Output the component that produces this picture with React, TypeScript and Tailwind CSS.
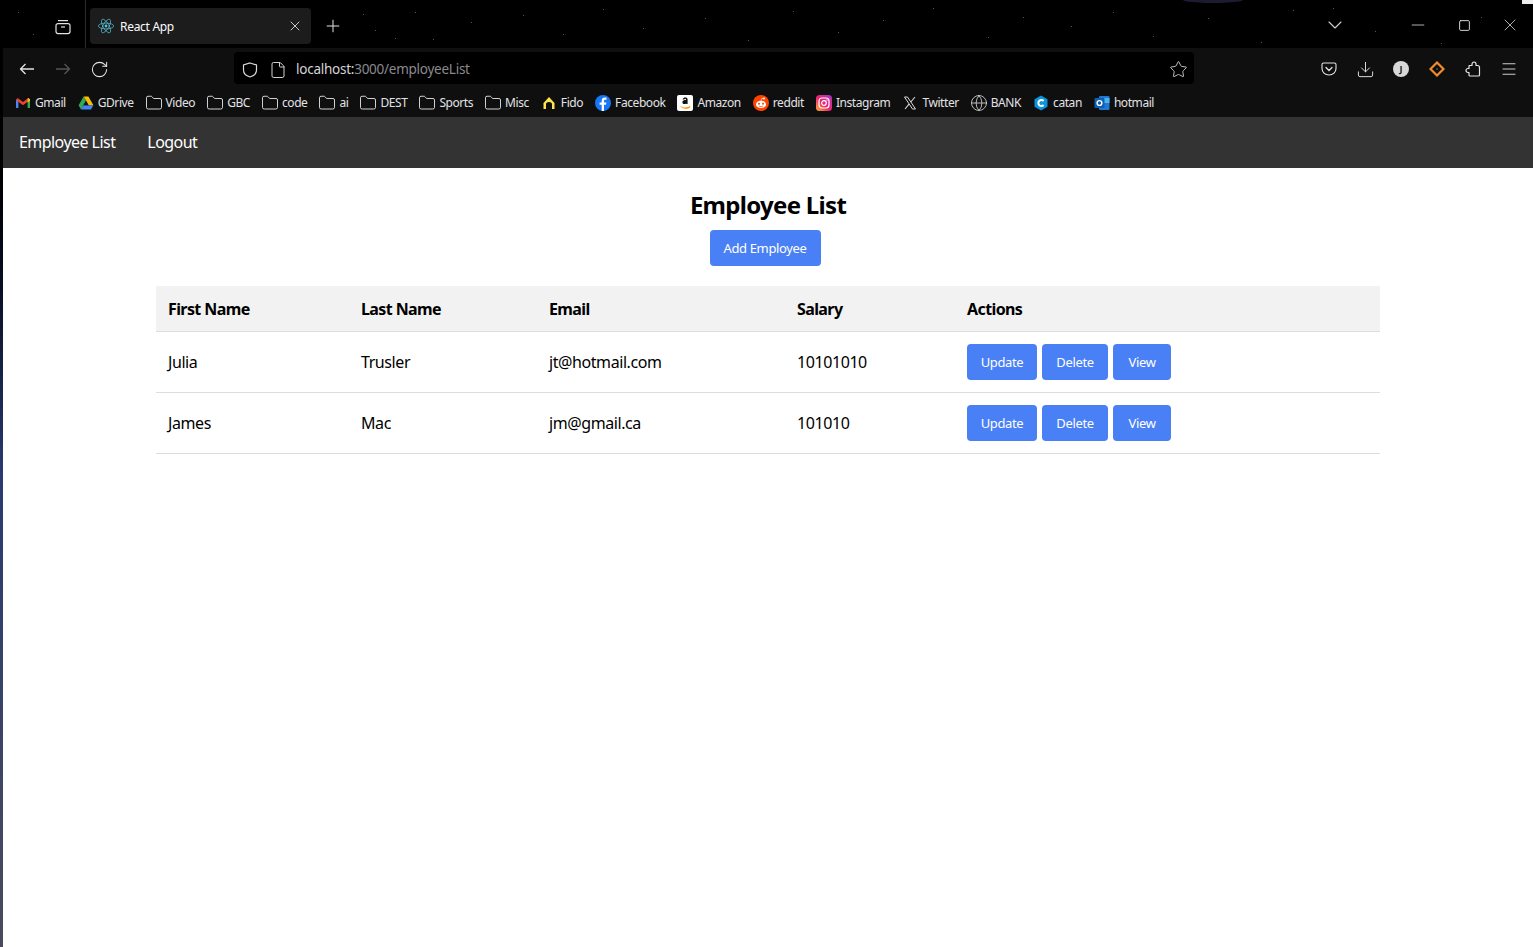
import { ChevronDown, Download, File, Folder, Globe, Menu, Minus, Plus, RotateCw, Square, Star, X } from 'lucide-react';
import type { ReactNode } from 'react';

const font = 'font-["Noto_Sans","Open_Sans",sans-serif]';

const stars = [
  [130, 9], [152, 17], [360, 14], [372, 30], [392, 38], [412, 12], [430, 39], [468, 22], [520, 15], [560, 34], [600, 9],
  [640, 28], [702, 18], [745, 40], [790, 11], [835, 32], [880, 20], [930, 8], [985, 37], [1020, 17], [1068, 26], [1110, 12],
  [1150, 36], [1205, 18], [1258, 42], [1290, 10], [1330, 8], [1372, 31], [1438, 43], [1478, 17], [30, 34], [15, 12],
];

function Bookmark({ icon, label }: { icon: ReactNode; label: string }) {
  return (
    <div className="flex h-4 items-center gap-[4px] text-[12px] leading-4 tracking-[-0.43px] text-[#e2e2e6]">
      <span className="flex h-4 w-4 shrink-0 items-center justify-center">{icon}</span>
      <span>{label}</span>
    </div>
  );
}

const folder = <Folder size={18} strokeWidth={1.2} className="shrink-0 text-[#e8e8ea]" />;

const Gmail = (
  <svg viewBox="0 0 16 16" className="h-4 w-4">
    <path d="M1 13V4.5L3.4 5.2V13H1Z" fill="#4a87f0" />
    <path d="M15 13V4.5L12.6 5.2V13H15Z" fill="#36a853" />
    <path d="M1 5L2.6 3L8 7L13.4 3L15 5L8 10.2L1 5Z" fill="#ea4335" />
    <path d="M13.4 3L15 4.2V6L12.6 7.6V3.6Z" fill="#fbbc04" />
  </svg>
);

const Drive = (
  <svg viewBox="0 0 16 16" className="h-4 w-4">
    <path d="M5.6 1.5H10.4L15.4 10.2H10.6Z" fill="#fbbc04" />
    <path d="M5.6 1.5L8 5.7L3 14.4L.6 10.2Z" fill="#34a853" />
    <path d="M3 14.4L5.4 10.2H15.4L13 14.4Z" fill="#4285f4" />
    <path d="M8 5.7L10.6 10.2H5.4Z" fill="#1a1a1a" />
  </svg>
);

const Fido = (
  <svg viewBox="0 0 16 16" className="h-4 w-4">
    <path d="M8 2L13.5 8V14H11V9.2C11 7.8 9.6 7 8 7S5 7.8 5 9.2V14H2.5V8Z" fill="#ffe44d" />
  </svg>
);

const Facebook = (
  <svg viewBox="0 0 16 16" className="h-4 w-4">
    <circle cx="8" cy="8" r="8" fill="#1877f2" />
    <path d="M9 16V9.8H11L11.4 7.4H9V6C9 5.2 9.3 4.7 10.4 4.7H11.5V2.6C11.2 2.5 10.5 2.5 9.9 2.5C8 2.5 6.7 3.6 6.7 5.7V7.4H4.6V9.8H6.7V16Z" fill="#fff" />
  </svg>
);

const Amazon = (
  <svg viewBox="0 0 16 16" className="h-4 w-4">
    <rect width="16" height="16" rx="2" fill="#fff" />
    <path d="M5.6 4.6C5.8 3 7 2.4 8.2 2.4C9.6 2.4 10.6 3 10.6 4.4V9H9.2V8.4C8.2 9.4 5.4 9.5 5.4 7.2C5.4 5.5 7.3 5.1 9 5.1V4.5C9 3.6 7.6 3.5 7.3 4.6Z" fill="#111" />
    <path d="M2.5 10.6C5.4 13 10 13 13.4 10.8L13 12.8C10 14.6 5.6 14.4 2.5 10.6Z" fill="#f90" />
  </svg>
);

const Reddit = (
  <svg viewBox="0 0 16 16" className="h-4 w-4">
    <circle cx="8" cy="8" r="8" fill="#ff4500" />
    <ellipse cx="8" cy="9.4" rx="5" ry="3.6" fill="#fff" />
    <circle cx="6" cy="8.8" r="1" fill="#ff4500" />
    <circle cx="10" cy="8.8" r="1" fill="#ff4500" />
    <path d="M6 11C7 11.8 9 11.8 10 11" stroke="#ff4500" strokeWidth=".7" fill="none" />
    <circle cx="11" cy="3.6" r="1" fill="#fff" />
    <path d="M8 6L8.8 3.4L11 3.6" stroke="#fff" strokeWidth=".6" fill="none" />
  </svg>
);

const Instagram = (
  <svg viewBox="0 0 16 16" className="h-4 w-4">
    <defs>
      <linearGradient id="ig" x1="0" y1="1" x2="1" y2="0">
        <stop offset="0" stopColor="#fdb82f" />
        <stop offset=".45" stopColor="#f0246e" />
        <stop offset="1" stopColor="#a832c8" />
      </linearGradient>
    </defs>
    <rect width="16" height="16" rx="3.5" fill="url(#ig)" />
    <rect x="3" y="3" width="10" height="10" rx="3" fill="none" stroke="#fff" strokeWidth="1.2" />
    <circle cx="8" cy="8" r="2.3" fill="none" stroke="#fff" strokeWidth="1.2" />
    <circle cx="11" cy="5" r=".7" fill="#fff" />
  </svg>
);

const XLogo = (
  <svg viewBox="0 0 16 16" className="h-4 w-4">
    <path d="M2.5 2H5.5L13.5 14H10.5Z" fill="none" stroke="#d8d8d8" strokeWidth="1" />
    <path d="M13 2L8.8 7M7 9.2L3 14" stroke="#d8d8d8" strokeWidth="1.1" />
  </svg>
);

const Catan = (
  <svg viewBox="0 0 16 16" className="h-4 w-4">
    <path d="M8 .5L14.5 4.2V11.8L8 15.5L1.5 11.8V4.2Z" fill="#0a94dc" />
    <path d="M10.6 6A3 3 0 1 0 10.6 10" stroke="#fff" strokeWidth="2" fill="none" />
  </svg>
);

const Outlook = (
  <svg viewBox="0 0 16 16" className="h-4 w-4">
    <rect x="5" y="1" width="10.5" height="14" rx="1" fill="#1f78d1" />
    <rect x="10" y="3" width="5.5" height="5" fill="#50b0ee" />
    <rect x="0.5" y="3" width="10" height="10" rx="1" fill="#0d5fb0" />
    <circle cx="5.5" cy="8" r="2.4" fill="none" stroke="#fff" strokeWidth="1.4" />
  </svg>
);

const bookmarks: [ReactNode, string][] = [
  [Gmail, 'Gmail'], [Drive, 'GDrive'], [folder, 'Video'], [folder, 'GBC'], [folder, 'code'], [folder, 'ai'], [folder, 'DEST'],
  [folder, 'Sports'], [folder, 'Misc'], [Fido, 'Fido'], [Facebook, 'Facebook'], [Amazon, 'Amazon'], [Reddit, 'reddit'],
  [Instagram, 'Instagram'], [XLogo, 'Twitter'], [<Globe key="g" size={18} strokeWidth={1.1} className="shrink-0 text-[#d8d8d8]" />, 'BANK'],
  [Catan, 'catan'], [Outlook, 'hotmail'],
];

function ToolButton({ children }: { children: ReactNode }) {
  return <div className="flex h-8 w-9 items-center justify-center pt-[2px] text-[#e4e4e6]">{children}</div>;
}

function ActionButton({ label, className }: { label: string; className: string }) {
  return (
    <button className={`flex h-9 items-center justify-center rounded-[4px] bg-[#4a80f5] pt-[2px] text-[13px] tracking-[-0.35px] text-white ${className}`}>
      {label}
    </button>
  );
}

const rows = [
  ['Julia', 'Trusler', 'jt@hotmail.com', '10101010'],
  ['James', 'Mac', 'jm@gmail.ca', '101010'],
];

export default function App() {
  return (
    <div className={`flex min-h-[947px] w-full bg-white ${font}`}>
      <div className="w-[3px] shrink-0 bg-gradient-to-b from-black from-[12%] via-[#2a3a70] via-[50%] to-[#4a4a5c]" />
      <div className="flex min-w-0 flex-1 flex-col">
        <div className="relative flex h-12 items-center bg-black">
          <svg className="absolute inset-0 h-full w-full" aria-hidden="true">
            {stars.map(([x, y]) => (
              <rect key={`${x}-${y}`} x={x} y={y} width="1" height="1" fill="#555" />
            ))}
            <ellipse cx="1210" cy="0" rx="30" ry="3" fill="#1c1c30" />
            <rect x="1519" y="0" width="11" height="4" fill="#eee" />
          </svg>
          <div className="relative flex h-full w-[83px] items-center justify-end border-r border-[#2a2a2a] pr-[14px] pt-[6px]">
            <svg viewBox="0 0 16 16" className="h-4 w-4 shrink-0 text-[#e4e4e6]" fill="none" stroke="currentColor" strokeWidth="1.2">
              <rect x="1" y="4.6" width="14" height="10" rx="2" />
              <path d="M3 1.6H13" />
              <path d="M6 8H10" />
            </svg>
          </div>
          <div className="relative ml-[4px] mt-[4px] flex h-9 w-[221px] items-center rounded-[4px] bg-[#1c1c1c] pl-[8px] pr-[8px]">
            <svg viewBox="-11.5 -10.2 23 20.4" className="h-4 w-4 shrink-0" fill="none" stroke="#58c4dc" strokeWidth="1">
              <circle r="2" fill="#58c4dc" stroke="none" />
              <ellipse rx="11" ry="4.2" />
              <ellipse rx="11" ry="4.2" transform="rotate(60)" />
              <ellipse rx="11" ry="4.2" transform="rotate(120)" />
            </svg>
            <span className="ml-[6px] flex-1 pt-[1px] text-[12px] tracking-[-0.3px] text-[#fbfbfe]">React App</span>
            <X size={16} strokeWidth={1.3} className="text-[#e4e4e6]" />
          </div>
          <div className="relative ml-[4px] mt-[4px] flex h-9 w-9 items-center justify-center">
            <Plus size={20} strokeWidth={1.2} className="text-[#e4e4e6]" />
          </div>
          <div className="relative ml-auto flex h-full items-center text-[#d0d0d0]">
            <div className="flex w-9 justify-center pt-[2px]"><ChevronDown size={24} strokeWidth={1.1} /></div>
            <div className="ml-[42px] flex w-[46px] justify-center pt-[2px]"><Minus size={20} strokeWidth={1} /></div>
            <div className="flex w-[46px] justify-center pt-[2px]"><Square size={13} strokeWidth={1} absoluteStrokeWidth /></div>
            <div className="flex w-[46px] justify-center pt-[2px]"><X size={20} strokeWidth={1} /></div>
          </div>
        </div>

        <div className="flex h-10 items-center bg-[#0f0f0f] px-[6px]">
          <ToolButton>
            <svg viewBox="0 0 16 16" className="h-4 w-4" fill="none" stroke="currentColor" strokeWidth="1.3">
              <path d="M1.5 8H15M6.5 3L1.5 8L6.5 13" />
            </svg>
          </ToolButton>
          <ToolButton>
            <svg viewBox="0 0 16 16" className="h-4 w-4 text-[#555]" fill="none" stroke="currentColor" strokeWidth="1.3">
              <path d="M1 8H14.5M9.5 3L14.5 8L9.5 13" />
            </svg>
          </ToolButton>
          <ToolButton><RotateCw size={19} strokeWidth={1.3} /></ToolButton>
          <div className="ml-[117px] flex h-8 w-[960px] items-center rounded-[4px] bg-black pl-[8px] pr-[6px] pt-[3px]">
            <svg viewBox="0 0 16 16" className="h-4 w-4 shrink-0 text-[#d8d8da]" fill="none" stroke="currentColor" strokeWidth="1.2">
              <path d="M8 1L14.5 3V8C14.5 11.5 11.5 14 8 15C4.5 14 1.5 11.5 1.5 8V3Z" />
            </svg>
            <File size={18} strokeWidth={1.3} className="ml-[11px] shrink-0 text-[#d8d8da]" />
            <span className="ml-[9px] flex-1 text-[13.5px] tracking-[-0.25px] text-[#8a8a8e]">
              <span className="text-[#d4d4d8]">localhost:</span>3000/employeeList
            </span>
            <Star size={19} strokeWidth={1.1} className="shrink-0 text-[#d8d8da]" />
          </div>
          <div className="ml-auto flex">
            <ToolButton>
              <svg viewBox="0 0 16 16" className="h-4 w-4" fill="none" stroke="currentColor" strokeWidth="1.1">
                <path d="M2.5 2H13.5C14.3 2 15 2.7 15 3.5V7.5C15 11 12 14 8 14S1 11 1 7.5V3.5C1 2.7 1.7 2 2.5 2Z" />
                <path d="M5 6.5L8 9.5L11 6.5" strokeLinecap="round" strokeWidth="1.3" />
              </svg>
            </ToolButton>
            <ToolButton><Download size={19} strokeWidth={1.2} /></ToolButton>
            <ToolButton>
              <span className="flex h-4 w-4 items-center justify-center rounded-full bg-[#d8d8d8] text-[9px] font-bold text-[#222]">J</span>
            </ToolButton>
            <ToolButton>
              <svg viewBox="0 0 16 16" className="h-4 w-4" fill="none">
                <path d="M8 1.5L14.5 8L8 14.5L1.5 8Z" stroke="#f28c28" strokeWidth="2.2" />
                <circle cx="8" cy="8" r="1" fill="#555" />
              </svg>
            </ToolButton>
            <ToolButton>
              <svg viewBox="0 0 16 16" className="h-4 w-4" fill="none" stroke="currentColor" strokeWidth="1.2" strokeLinejoin="round">
                <path d="M4.5 4.5H7V3.2C7 2 8 1 9 1S11 2 11 3.2V4.5H12.5C13.6 4.5 14.5 5.4 14.5 6.5V14C14.5 14.6 14 15 13.5 15H5C4.4 15 4 14.6 4 14V11.5H3C1.8 11.5 1 10.6 1 9.5S1.8 7.5 3 7.5H4V5Z" />
              </svg>
            </ToolButton>
            <ToolButton><Menu size={18} strokeWidth={1.2} /></ToolButton>
          </div>
        </div>

        <div className="flex h-[29px] items-center gap-3 bg-[#0f0f0f] pl-3 pt-[1px]">
          {bookmarks.map(([icon, label]) => (
            <Bookmark key={label} icon={icon} label={label} />
          ))}
        </div>

        <nav className="flex h-[51px] items-center gap-8 bg-[#333] pb-[1px] pl-4 text-[16px] tracking-[-0.55px] text-white">
          <span>Employee List</span>
          <span>Logout</span>
        </nav>

        <main className="flex flex-col items-center pt-[19px]">
          <h2 className="text-[24px] font-bold leading-9 tracking-[-0.7px] text-black">Employee List</h2>
          <ActionButton label="Add Employee" className="mt-[7px] w-[111px] -translate-x-[3px]" />
          <table className="mt-5 w-[1224px] table-fixed border-collapse text-left text-[16px] tracking-[-0.42px] text-black">
            <colgroup>
              <col className="w-[193px]" />
              <col className="w-[188px]" />
              <col className="w-[248px]" />
              <col className="w-[170px]" />
              <col />
            </colgroup>
            <thead>
              <tr className="h-[45px] border-b border-[#ddd] bg-[#f2f2f2]">
                {['First Name', 'Last Name', 'Email', 'Salary', 'Actions'].map((h) => (
                  <th key={h} className="px-3 pt-[2px] font-bold tracking-[-0.6px]">{h}</th>
                ))}
              </tr>
            </thead>
            <tbody>
              {rows.map((r) => (
                <tr key={r[0]} className="h-[61px] border-b border-[#ddd]">
                  {r.map((c) => (
                    <td key={c} className="px-3">{c}</td>
                  ))}
                  <td className="px-3">
                    <div className="flex gap-[5px]">
                      <ActionButton label="Update" className="w-[70px]" />
                      <ActionButton label="Delete" className="w-[66px]" />
                      <ActionButton label="View" className="w-[58px]" />
                    </div>
                  </td>
                </tr>
              ))}
            </tbody>
          </table>
        </main>
      </div>
    </div>
  );
}
